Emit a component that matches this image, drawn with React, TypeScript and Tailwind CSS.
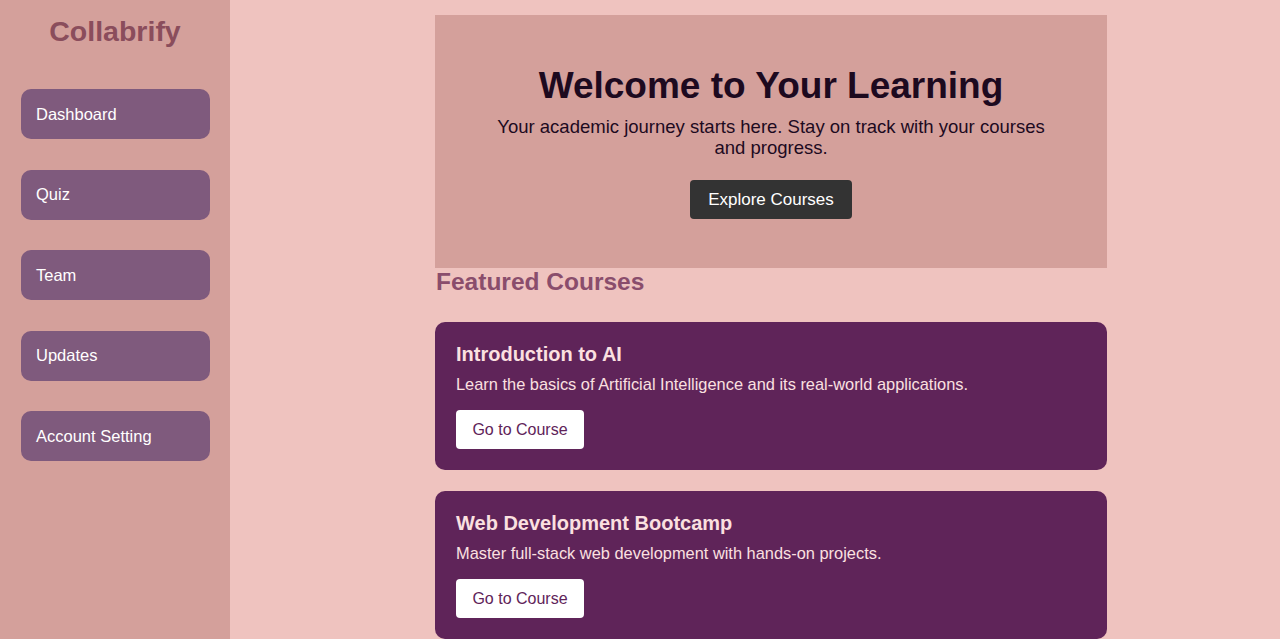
import React from "react";

const navItems = ["Dashboard", "Quiz", "Team", "Updates", "Account Setting"];

const courses = [
  {
    title: "Introduction to AI",
    text: "Learn the basics of Artificial Intelligence and its real-world applications.",
  },
  {
    title: "Web Development Bootcamp",
    text: "Master full-stack web development with hands-on projects.",
  },
];

const App = () => {
  return (
    <div className="flex h-[639px] overflow-hidden bg-[#efc3bf] font-['Liberation_Sans',Arial,sans-serif]">
      <aside className="w-[230px] shrink-0 bg-[#d4a09b]">
        <h1 className="pt-[13px] text-center text-[28.5px] leading-[36px] font-bold text-[#8a4d5c]">
          Collabrify
        </h1>
        <nav className="mt-[40px] ml-[21px] flex w-[189px] flex-col gap-[30.5px]">
          {navItems.map((item) => (
            <div
              key={item}
              className="flex h-[50px] items-center rounded-[10px] bg-[#7f5a7d] pl-[15px] text-[16.5px] text-white"
            >
              {item}
            </div>
          ))}
        </nav>
      </aside>

      <main className="flex-1 pl-8">
        <div className="mx-auto w-[672px] pt-[15px]">
          <section className="flex h-[253px] flex-col items-center bg-[#d4a09b] pt-[49px] text-center">
            <h2 className="text-[37px] leading-[44px] font-bold text-[#1d0a1f]">
              Welcome to Your Learning
            </h2>
            <p className="mt-[8px] w-[570px] text-[18.5px] leading-[21px] text-[#1d0a1f]">
              Your academic journey starts here. Stay on track with your courses
              and progress.
            </p>
            <button className="mt-[22px] h-[39px] w-[162px] rounded-[4px] bg-[#333333] text-[17px] text-white">
              Explore Courses
            </button>
          </section>

          <h2 className="pl-px text-[24.5px] leading-[28px] font-bold text-[#8a4d6c]">
            Featured Courses
          </h2>

          <div className="mt-[26px] flex flex-col gap-[21px]">
            {courses.map((c) => (
              <div
                key={c.title}
                className="h-[148px] rounded-[10px] bg-[#5f2459] px-[21px] pt-[20px]"
              >
                <h3 className="text-[20px] leading-[24px] font-bold text-[#fbe0e0]">
                  {c.title}
                </h3>
                <p className="mt-[9px] text-[16.4px] leading-[19px] text-[#fbe0e0]">
                  {c.text}
                </p>
                <button className="mt-[16px] h-[39px] w-[128px] rounded-[4px] bg-white text-[16px] text-[#5f2459]">
                  Go to Course
                </button>
              </div>
            ))}
          </div>
        </div>
      </main>
    </div>
  );
};

export default App;
